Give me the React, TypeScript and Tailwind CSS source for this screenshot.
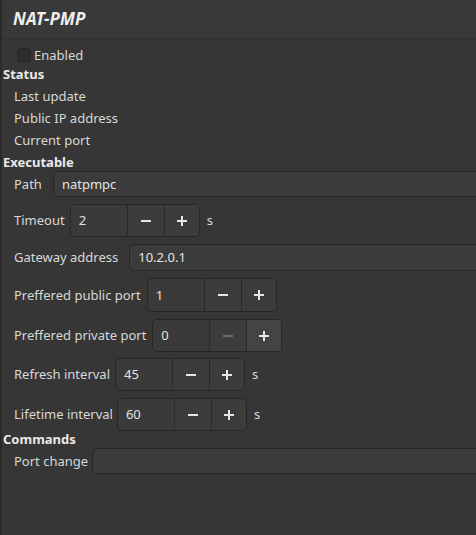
import React from "react";

const font = { fontFamily: '"Noto Sans", "DejaVu Sans", sans-serif' };

function Minus({ disabled }: { disabled?: boolean }) {
  return (
    <svg width="12" height="12" viewBox="0 0 12 12">
      <rect x="1" y="5" width="10" height="2" fill={disabled ? "#6b6b6b" : "#e6e6e6"} />
    </svg>
  );
}

function Plus() {
  return (
    <svg width="12" height="12" viewBox="0 0 12 12">
      <rect x="1" y="5" width="10" height="2" fill="#e6e6e6" />
      <rect x="5" y="1" width="2" height="10" fill="#e6e6e6" />
    </svg>
  );
}

function SpinBox({ value, minusDisabled, plusHover }: { value: string; minusDisabled?: boolean; plusHover?: boolean }) {
  return (
    <div className="flex h-full w-[130px] shrink-0 rounded-[5px] border border-[#262626] bg-[#3a3a3a] overflow-hidden">
      <div className="flex w-[56px] items-center pl-[8px] pt-[1px] text-[13px] text-[#e3e3e3]">{value}</div>
      <div className="flex w-[37px] items-center justify-center border-l border-[#2a2a2a] bg-[#3c3c3c]">
        <Minus disabled={minusDisabled} />
      </div>
      <div className={`flex flex-1 items-center justify-center border-l border-[#2a2a2a] ${plusHover ? "bg-[#444444]" : "bg-[#3c3c3c]"}`}>
        <Plus />
      </div>
    </div>
  );
}

function Entry({ value }: { value?: string }) {
  return (
    <div className="-mr-4 flex h-full flex-1 items-center rounded-[5px] border border-[#262626] bg-[#3b3b3b] pl-[8px] pt-[1px] text-[13px] text-[#e3e3e3]">
      {value}
    </div>
  );
}

export default function App() {
  return (
    <div className="h-[535px] w-[476px] overflow-hidden border-l-2 border-[#2a2a2a] bg-[#363636] text-[13px] text-[#d8d8d8]" style={font}>
      <div className="flex h-[39px] items-center border-b border-[#2e2e2e] bg-[#393939] pl-[11px] pb-[1px]">
        <span className="text-[17px] font-bold italic text-[#eeeeee]">NAT-PMP</span>
      </div>

      <div className="flex flex-col">
        <div className="mt-[5px] flex h-[22px] items-center pl-[15px]">
          <span className="h-[14px] w-[14px] rounded-[3px] border border-[#242424] bg-[#2d2d2d]" />
          <span className="ml-[3px] pt-[1px]">Enabled</span>
        </div>

        <div className="flex h-[16px] items-center pl-[1px] pt-[1px] font-bold text-[#eaeaea]">Status</div>
        <div className="mt-[3px] flex h-[22px] items-center pl-[12px] pt-[1px]">Last update</div>
        <div className="flex h-[22px] items-center pl-[12px] pt-[1px]">Public IP address</div>
        <div className="flex h-[22px] items-center pl-[12px] pt-[1px]">Current port</div>

        <div className="mt-[3px] flex h-[16px] items-center pl-[1px] pt-[1px] font-bold text-[#eaeaea]">Executable</div>
        <div className="mt-[1px] flex h-[26px] items-center gap-[11px] pl-[12px]">
          <span className="pt-[1px]">Path</span>
          <Entry value="natpmpc" />
        </div>
        <div className="mt-[7px] flex h-[33px] items-center gap-[5px] pl-[12px]">
          <span className="pt-[1px]">Timeout</span>
          <SpinBox value="2" />
          <span className="ml-[2px] pt-[1px]">s</span>
        </div>
        <div className="mt-[7px] flex h-[27px] items-center gap-[11px] pl-[12px]">
          <span className="pt-[1px]">Gateway address</span>
          <Entry value="10.2.0.1" />
        </div>
        <div className="mt-[7px] flex h-[34px] items-center gap-[6px] pl-[12px]">
          <span className="pt-[1px]">Preffered public port</span>
          <SpinBox value="1" />
        </div>
        <div className="mt-[7px] flex h-[33px] items-center gap-[6px] pl-[12px]">
          <span className="pt-[1px]">Preffered private port</span>
          <SpinBox value="0" minusDisabled plusHover />
        </div>
        <div className="mt-[6px] flex h-[33px] items-center gap-[5px] pl-[12px]">
          <span className="pt-[1px]">Refresh interval</span>
          <SpinBox value="45" />
          <span className="ml-[2px] pt-[1px]">s</span>
        </div>
        <div className="mt-[7px] flex h-[33px] items-center gap-[4px] pl-[12px]">
          <span className="pt-[1px]">Lifetime interval</span>
          <SpinBox value="60" />
          <span className="ml-[3px] pt-[1px]">s</span>
        </div>

        <div className="flex h-[16px] items-center pl-[1px] pt-[1px] font-bold text-[#eaeaea]">Commands</div>
        <div className="mt-[1px] flex h-[26px] items-center gap-[4px] pl-[12px]">
          <span className="pt-[1px]">Port change</span>
          <Entry />
        </div>
      </div>
    </div>
  );
}
